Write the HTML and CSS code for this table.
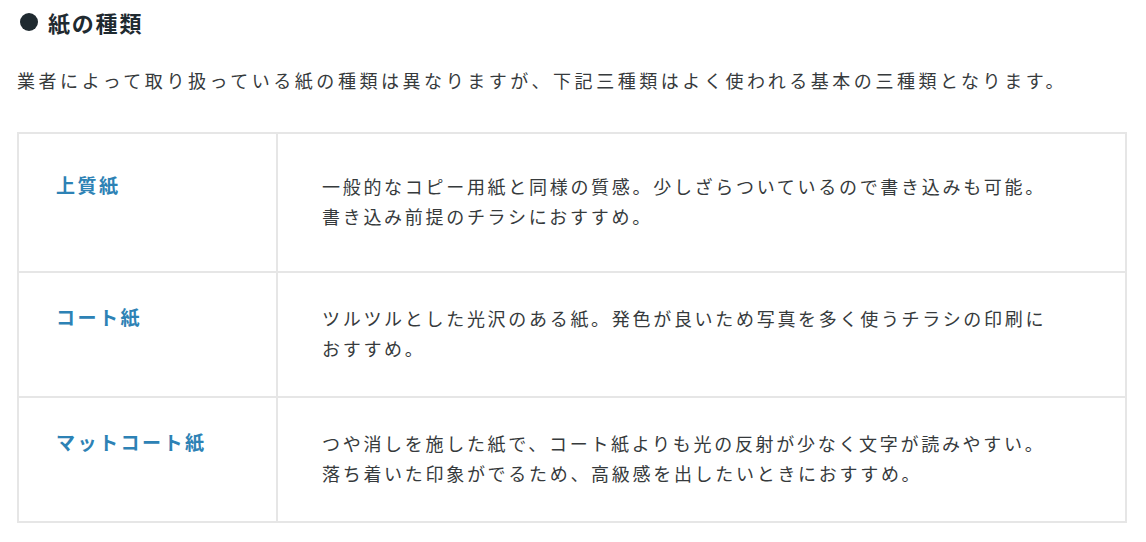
FILE: index.html
```html
<!DOCTYPE html>
<html lang="ja">
<head>
<meta charset="utf-8">
<link rel="stylesheet" href="styles.css">
</head>
<body>
<div class="wrap">
  <h2 class="title"><span class="dot"></span>紙の種類</h2>
  <p class="lead">業者によって取り扱っている紙の種類は異なりますが、下記三種類はよく使われる基本の三種類となります。</p>
  <table class="paper">
    <tbody>
      <tr class="first">
        <th class="name">上質紙</th>
        <td class="desc">一般的なコピー用紙と同様の質感。少しざらついているので書き込みも可能。<br>書き込み前提のチラシにおすすめ。</td>
      </tr>
      <tr>
        <th class="name">コート紙</th>
        <td class="desc">ツルツルとした光沢のある紙。発色が良いため写真を多く使うチラシの印刷に<br>おすすめ。</td>
      </tr>
      <tr>
        <th class="name">マットコート紙</th>
        <td class="desc">つや消しを施した紙で、コート紙よりも光の反射が少なく文字が読みやすい。<br>落ち着いた印象がでるため、高級感を出したいときにおすすめ。</td>
      </tr>
    </tbody>
  </table>
</div>
</body>
</html>
```

FILE: styles.css
```css
html, body {
  margin: 0;
  padding: 0;
  background: #ffffff;
}
body {
  font-family: "Noto Sans CJK JP", "Noto Sans", sans-serif;
  color: #363a3c;
}
.wrap {
  padding: 0 19px 0 17px;
}
.title {
  margin: 0;
  padding-top: 7px;
  display: flex;
  align-items: center;
  font-size: 22px;
  line-height: 30px;
  font-weight: 700;
  color: #1f2a30;
  letter-spacing: 1.8px;
}
.dot {
  display: inline-block;
  width: 18px;
  height: 18px;
  border-radius: 50%;
  background: #1f2a30;
  margin: 0 10px 0 3px;
}
.lead {
  margin: 28px 0 0 0;
  font-size: 18px;
  line-height: 30px;
  letter-spacing: 3.55px;
  white-space: nowrap;
}
.paper {
  margin-top: 37px;
  width: 1110px;
  border-collapse: separate;
  border-spacing: 0;
  border-top: 2px solid #e6e6e6;
  border-left: 2px solid #e6e6e6;
}
.paper th,
.paper td {
  border-right: 2px solid #e6e6e6;
  border-bottom: 2px solid #e6e6e6;
  vertical-align: top;
  text-align: left;
  padding: 30px 0 33px 0;
}
.paper tr.first th,
.paper tr.first td {
  padding-top: 37px;
  padding-bottom: 40px;
}
.name {
  width: 220px;
  padding-left: 37px !important;
  font-size: 19px;
  line-height: 27px;
  font-weight: 700;
  color: #2d82b5;
  letter-spacing: 2.5px;
}
.desc {
  padding-left: 44px !important;
  font-size: 18px;
  line-height: 30px;
  letter-spacing: 2.7px;
  white-space: nowrap;
}
```
